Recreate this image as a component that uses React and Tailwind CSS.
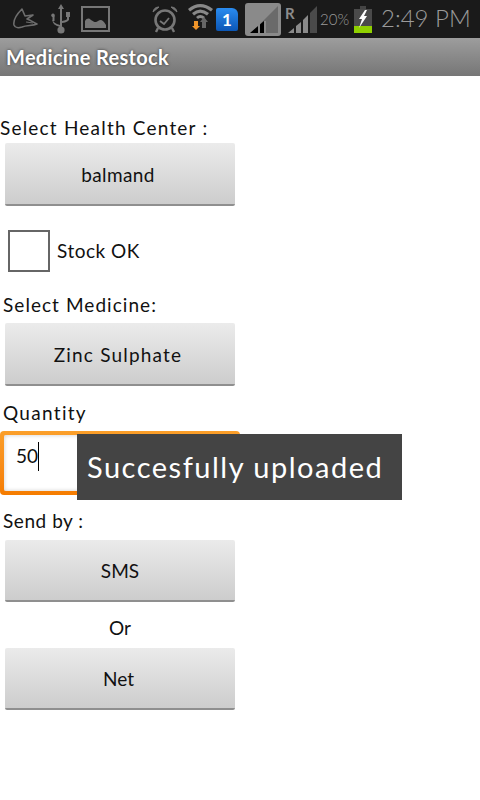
import React from "react";

const StatusIcons = () => (
  <div className="flex h-[38px] items-center bg-[#1a1a1a] pl-[13px] text-[#8c8c8c]">
    {/* bird */}
    <svg width="26" height="24" viewBox="0 0 26 24">
      <path d="M9 2 C4 7 0 13 1 18 C2 21 6 21 9 20 C14 18 19 19 24 17 C20 15 17 13 14 12 L20 8 L12 9 Z" fill="none" stroke="#6e6e6e" strokeWidth="1.6" strokeLinejoin="round" />
      <path d="M13 15 L20 16" stroke="#6e6e6e" strokeWidth="1.2" />
    </svg>
    {/* usb */}
    <svg className="ml-[12px]" width="20" height="31" viewBox="0 0 20 31" fill="#777">
      <path d="M10 0 L13 5 H11 V24 H9 V5 H7 Z" />
      <circle cx="10" cy="26" r="3.6" />
      <rect x="15" y="8" width="4" height="5" />
      <rect x="16" y="12" width="2" height="4" />
      <path d="M2 9.5 a1.8 1.8 0 1 0 .01 0 Z" />
      <rect x="1.5" y="12" width="2" height="5" />
      <path d="M2 16 Q2 19 9 21 V23 Q1 21 1.5 16 Z M18 15 Q18 18 11 19 V17 Q16 16 16 15 Z" />
    </svg>
    {/* picture */}
    <svg className="ml-[10px]" width="29" height="26" viewBox="0 0 29 26">
      <rect x="1" y="1" width="27" height="24" fill="none" stroke="#777" strokeWidth="2" />
      <path d="M4 22 V15 C6 12 8 12 10 14 C13 16 15 17 17 15 C20 13 22 14 25 19 V22 Z" fill="#777" />
    </svg>
    {/* alarm clock */}
    <svg className="ml-[41px]" width="28" height="28" viewBox="0 0 28 28">
      <circle cx="14" cy="15" r="9.5" fill="none" stroke="#777" strokeWidth="2.6" />
      <path d="M9 16 L13 19 L18 13" fill="none" stroke="#777" strokeWidth="1.8" />
      <path d="M2 7 Q3 2 8 2 Z M26 7 Q25 2 20 2 Z" fill="#777" stroke="#777" />
      <path d="M7 23 L5 27 M21 23 L23 27" stroke="#777" strokeWidth="2.4" />
    </svg>
    {/* wifi */}
    <svg className="mb-[6px] ml-[8px]" width="27" height="28" viewBox="0 0 27 28">
      <path d="M1 7 Q13 -3 26 7 L24 9.5 Q13 1 3 9.5 Z" fill="#888" />
      <path d="M5 11 Q13 4 22 11 L20 13.5 Q13 8 7 13.5 Z" fill="#888" />
      <path d="M9 15 Q13 11 18 15 L16 17 Q13 15 11 17 Z" fill="#888" />
      <path d="M7 19 H11 V24 H13 L9 28 L5 24 H7 Z" fill="#f0952a" />
      <path d="M17 15 L21 20 H19 V26 H15 V20 H13 Z" fill="#666" />
    </svg>
    {/* sim badge */}
    <div className="ml-[2px] flex h-[23px] w-[22px] items-center justify-center rounded-tr-[6px] rounded-b-[2px] rounded-tl-[2px] bg-gradient-to-b from-[#2a8cf0] to-[#0b56b5] text-[17px] leading-none font-bold text-white">
      1
    </div>
    {/* signal box */}
    <svg className="ml-[7px]" width="36" height="33" viewBox="0 0 36 33">
      <rect x="0" y="0" width="36" height="33" rx="3" fill="#8a8a8a" />
      <path d="M33 3 V30 H6 Z" fill="#6a6a6a" />
      <path d="M5 30 L19 18 V30 Z" fill="#000" />
      <rect x="13" y="20" width="2" height="10" fill="#8a8a8a" />
      <rect x="19" y="18" width="2" height="12" fill="#8a8a8a" />
    </svg>
    {/* R signal */}
    <div className="relative ml-[4px] h-[28px] w-[33px]">
      <span className="absolute top-0 left-0 text-[15px] leading-[16px] font-bold text-[#8c8c8c]">R</span>
      <svg className="absolute top-0 left-[3px]" width="30" height="28" viewBox="0 0 30 28">
        <path d="M0 28 L6 23 V28 Z" fill="#8a8a8a" />
        <path d="M8 21 L13 17 V28 H8 Z" fill="#8a8a8a" />
        <path d="M15 15 L20 10 V28 H15 Z" fill="#8a8a8a" />
        <path d="M22 8 L29 1 V28 H22 Z" fill="#4a4a4a" />
      </svg>
    </div>
    <span className="ml-[2px] w-[34px] text-[15px] leading-[18px] font-light text-[#9a9a9a]">20%</span>
    {/* battery */}
    <svg width="18" height="27" viewBox="0 0 18 27">
      <rect x="6" y="0" width="6" height="3" fill="#444" />
      <rect x="0" y="3" width="18" height="17" fill="#4a4a4a" />
      <rect x="0" y="20" width="18" height="7" fill="#8fd000" />
      <path d="M11 4 L5 13 H8 L5 22 L13 10 H10 L13 4 Z" fill="#fff" />
    </svg>
    <span className="ml-[9px] mb-[2px] text-[24px] leading-[28px] font-light text-[#9a9a9a]">2:49 PM</span>
  </div>
);

const Label = ({ className, children }) => (
  <div className={`h-6 text-[19px] leading-6 text-[#111] ${className}`}>{children}</div>
);

const Btn = ({ className, children }) => (
  <button className={`mx-[5px] flex w-[230px] items-center justify-center rounded-[2px] border-b-2 border-[#8f8f8f] bg-gradient-to-b from-[#ebebeb] to-[#cdcdcd] text-[19px] text-[#111] ${className}`}>
    {children}
  </button>
);

export default function App() {
  return (
    <div className="relative h-[800px] w-[480px] overflow-hidden bg-white font-['Lato','Noto_Sans',sans-serif]">
      <StatusIcons />
      <div className="flex h-[38px] items-center bg-gradient-to-b from-[#9d9d9d] to-[#767676] pl-[6px] text-[20px] font-bold tracking-[0.3px] text-white [text-shadow:0_0_3px_#333]">
        Medicine Restock
      </div>

      <Label className="mt-[40px] tracking-[1.2px]">Select Health Center :</Label>
      <Btn className="mt-[3px] h-[63px] pt-1 pr-1 tracking-[0.4px]">balmand</Btn>

      <div className="mt-[24px] flex h-[42px] items-center pl-[8px]">
        <div className="h-[42px] w-[42px] border-2 border-[#666]" />
        <span className="ml-[7px] text-[19px] tracking-[0.5px] text-[#111]">Stock OK</span>
      </div>

      <Label className="mt-[21px] pl-[3px] tracking-[1.05px]">Select Medicine:</Label>
      <Btn className="mt-[6px] h-[63px] pt-1 pr-1 tracking-[1.2px]">Zinc Sulphate</Btn>

      <Label className="mt-[15px] pl-[3px] tracking-[1.3px]">Quantity</Label>
      <div className="mt-[6px] h-[64px] w-[240px] rounded-[4px] bg-gradient-to-b from-[#fb9f2a] to-[#f57c00] p-[4px]">
        <div className="flex h-full items-center rounded-[2px] bg-white pb-[14px] pl-[12px] text-[19px] text-[#111] shadow-[inset_0_0_4px_#ccc]">
          50<span className="h-[29px] w-px bg-black" />
        </div>
      </div>

      <Label className="mt-[14px] pl-[3px] tracking-[0.55px]">Send by :</Label>
      <Btn className="mt-[7px] h-[62px] pt-[2px]">SMS</Btn>
      <Label className="mt-[14px] w-[240px] text-center">Or</Label>
      <Btn className="mt-[8px] h-[62px] pt-[2px] pr-[3px]">Net</Btn>

      {/* toast */}
      <div className="absolute top-[434px] left-[77px] flex h-[66px] w-[325px] items-center bg-[#444444] pl-[10px] text-[29px] tracking-[1.5px] text-white">
        Succesfully uploaded
      </div>
    </div>
  );
}
